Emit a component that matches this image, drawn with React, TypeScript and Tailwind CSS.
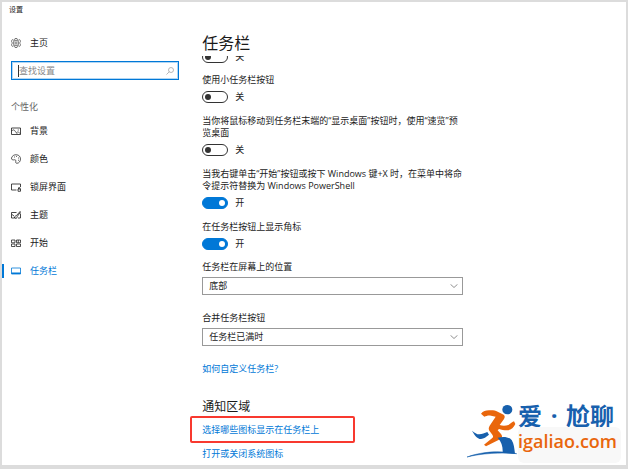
import { useState, type ReactNode } from "react";

const Icon = ({ children }: { children: ReactNode }) => (
  <svg
    viewBox="0 0 20 20"
    className="h-[10px] w-[10px] shrink-0"
    fill="none"
    stroke="currentColor"
    strokeWidth="1.6"
    aria-hidden="true"
  >
    {children}
  </svg>
);

const GearIcon = () => (
  <Icon>
    <g strokeWidth="1.3" opacity="0.85">
      <path d="M8 1h4l.7 2.400 2.300 1 2.300-1.200 2 3-1.400 2.300v3l1.400 2.300-2 3-2.300-1.200-2.300 1L12 19H8l-.7-2.400-2.300-1-2.300 1.200-2-3L2.100 11.500v-3L.7 6.200l2-3L5 4.400l2.300-1z" />
      <circle cx="10" cy="10" r="5.500" />
      <circle cx="10" cy="10" r="2.300" />
    </g>
  </Icon>
);

const PictureIcon = () => (
  <Icon>
    <path d="M1 4h18v13H1z" />
    <path d="M1 9.500l5-2 7 9M11 13l3-1.500 5 4" strokeWidth="1.2" />
    <path d="M13.500 8h2" />
  </Icon>
);

const PaletteIcon = () => (
  <Icon>
    <path d="M1 8c1-4 5-7 10-6.500 5 .4 8 4 8 8.500s-3 8.500-7 8.500c-2.500 0-3-1.500-2.500-3.500.5-2.500-.5-4-2.500-3.500C3.500 12.500.5 11.500 1 8z" strokeWidth="1.4" />
    <path d="M6 6h1.500M10.500 4.800H12M14.500 8H16M14 12.500h1.500" strokeWidth="1.8" />
  </Icon>
);

const LockScreenIcon = () => (
  <Icon>
    <path d="M11 16H1V4h18v6" />
    <path d="M14 14h5v4.500h-5zM15 14v-2.500h3V14" />
  </Icon>
);

const ThemeIcon = () => (
  <Icon>
    <path d="M11 5H1v11h5M14 16h5V7" />
    <path d="M19 2l-8 9M11 11c-3 0-3 2-3 4H6c2 3 7 2 6.500-2L19 4" />
    <path d="M2 9l4 3" />
  </Icon>
);

const StartIcon = () => (
  <Icon>
    <path d="M1 4h7v5.500H1zM11 4h8v5.500h-8zM1 12h7v5H1zM11 12h8v5h-8zM14.500 4v5.500" strokeWidth="1.5" />
  </Icon>
);

const TaskbarIcon = () => (
  <Icon>
    <path d="M1 4h18v12H1z" />
    <path d="M1 14.500h18" strokeWidth="3" />
  </Icon>
);

const navItems = [
  { name: "背景", icon: <PictureIcon /> },
  { name: "颜色", icon: <PaletteIcon /> },
  { name: "锁屏界面", icon: <LockScreenIcon /> },
  { name: "主题", icon: <ThemeIcon /> },
  { name: "开始", icon: <StartIcon /> },
  { name: "任务栏", icon: <TaskbarIcon />, active: true },
];

type ToggleProps = { label: string; defaultOn?: boolean };

const Toggle = ({ label, defaultOn = false }: ToggleProps) => {
  const [on, setOn] = useState(defaultOn);
  return (
    <label className="flex h-3 shrink-0 items-center gap-[7px] text-[9px] leading-3">
      <input
        type="checkbox"
        role="switch"
        aria-label={label}
        checked={on}
        onChange={(e) => setOn(e.target.checked)}
        className="flex h-3 w-[26px] appearance-none items-center rounded-full border border-[#333] px-[2px] before:h-[6px] before:w-[6px] before:rounded-full before:bg-[#333] checked:justify-end checked:border-[#0078d7] checked:bg-[#0078d7] checked:before:bg-white"
      />
      {on ? "开" : "关"}
    </label>
  );
};

const ToggleSetting = ({ label, defaultOn, children }: ToggleProps & { children: ReactNode }) => (
  <div className="flex flex-col gap-[5px]">
    <p>{children}</p>
    <Toggle label={label} defaultOn={defaultOn} />
  </div>
);

type SelectProps = { id: string; label: string; options: string[] };

const SelectSetting = ({ id, label, options }: SelectProps) => (
  <div className="flex flex-col gap-1">
    <label htmlFor={id}>{label}</label>
    <div className="relative">
      <select
        id={id}
        className="block h-[18px] w-full appearance-none border border-[#999] bg-white pl-[6px] text-[9px] leading-4"
      >
        {options.map((option) => (
          <option key={option}>{option}</option>
        ))}
      </select>
      <svg
        viewBox="0 0 8 4"
        className="pointer-events-none absolute top-[7px] right-[5px] h-1 w-2"
        fill="none"
        stroke="#777"
        strokeWidth="0.8"
        aria-hidden="true"
      >
        <path d="M.5.3L4 3.500 7.500.3" />
      </svg>
    </div>
  </div>
);

const Sidebar = () => (
  <aside className="w-[30%] max-w-72 shrink-0">
    <div className="pt-1 pl-[7px] text-[7px] leading-2">设置</div>
    <a href="#home" className="mt-[22px] flex h-[14px] items-center gap-[9px] pl-[9px]">
      <GearIcon />
      主页
    </a>
    <div className="mt-[11px] mr-[10px] ml-[9px] flex h-[19px] items-center border border-[#0078d7] pr-1 pl-[6px] ring-1 ring-[#0078d7]/30 ring-inset">
      <span className="h-3 w-px bg-[#333]" />
      <input
        type="search"
        aria-label="查找设置"
        placeholder="查找设置"
        className="min-w-0 flex-1 text-[9px] leading-3 outline-none placeholder:text-[#888]"
      />
      <svg viewBox="0 0 16 16" className="h-2 w-2" fill="none" stroke="#999" strokeWidth="1.400" aria-hidden="true">
        <circle cx="10" cy="6" r="5" />
        <path d="M6.500 9.500L1 15" />
      </svg>
    </div>
    <h2 className="mt-[21px] pl-[9px] text-[#666]">个性化</h2>
    <nav className="mt-1 flex flex-col">
      {navItems.map((item) => (
        <a
          key={item.name}
          href="#"
          className={
            item.active
              ? "flex h-7 items-center text-[#0078d7]"
              : "flex h-7 items-center"
          }
        >
          <span className={item.active ? "h-[14px] w-[2px] bg-[#0078d7]" : "h-[14px] w-[2px]"} />
          <span className="flex items-center gap-[9px] pl-[7px]">
            {item.icon}
            {item.name}
          </span>
        </a>
      ))}
    </nav>
  </aside>
);

const Watermark = () => (
  <div className="pointer-events-none absolute right-[5px] bottom-[2px] flex h-[60px] items-start gap-px">
    <svg viewBox="-6 8 150 165" className="h-[55px] w-[50px]" aria-hidden="true">
      <ellipse cx="115" cy="28" rx="15" ry="14" fill="#1760ad" />
      <path
        d="M36 40c6-8 14-10 24-10 10-1 18 0 26 4l18 9c4 3 4 8 1 13L92 74c8 3 18 3 26 0 6-3 10-8 17-11l4 8c-5 11-14 19-26 19-8 0-16-2-23-4l-4 4 10 11c5 6 4 12-3 16l-42 21-6-5 24-19c4-3 4-7 1-11l-9-12c-3-5-2-10 1-15l18-27-14-3c-8-2-14 1-20 3z"
        fill="#e9660c"
      />
      <path d="M9 91c8 6 14 11 22 11s16-4 24-7l5 8c-8 7-16 12-24 13-12 0-20-13-27-25z" fill="#1760ad" />
      <path d="M86 112c16-4 34-3 42 7 7 11 8 26 10 41l-37-2c1-18-3-34-15-46z" fill="#1760ad" />
      <path d="M-6 170c40-15 96-21 149-10-50-4-104-1-149 10z" fill="#1760ad" stroke="#1760ad" strokeWidth="1.5" />
    </svg>
    <div className="flex h-[60px] flex-col">
      <div className="flex font-['Noto_Sans_CJK_SC',sans-serif] text-[24px] leading-6 font-bold text-[#1760ad]">
        爱<span className="w-6 text-center font-['Open_Sans',sans-serif]">·</span>尬聊
      </div>
      <div className="h-9 rounded-md bg-[#f8f8f8] pr-1 font-['Open_Sans',sans-serif] text-[18px] leading-7 font-semibold text-[#e9660c]">
        igaliao.com
      </div>
    </div>
  </div>
);

export default function App() {
  return (
    <div className="min-h-screen bg-[#dcdcdc] px-[2px] pt-[2px] pb-1 font-['Open_Sans','Noto_Sans_CJK_SC',sans-serif] text-[9px] leading-3 text-[#1a1a1a]">
      <div className="relative flex bg-white">
        <Sidebar />
        <main className="min-w-0 flex-1 pt-7 pr-4 pb-[5px] pl-[13px]">
          <h1 className="text-[16px] leading-[26px]">任务栏</h1>
          {/* row scrolled halfway under the page title */}
          <div className="flex h-[7px] flex-col justify-end overflow-hidden">
            <Toggle label="锁定任务栏" />
          </div>

          <div className="mt-[11px] flex max-w-[261px] flex-col gap-3">
            <ToggleSetting label="使用小任务栏按钮">使用小任务栏按钮</ToggleSetting>
            <ToggleSetting label="使用速览预览桌面">
              当你将鼠标移动到任务栏末端的“显示桌面”按钮时，使用“速览”预
              <br />
              览桌面
            </ToggleSetting>
            <ToggleSetting label="替换为 Windows PowerShell" defaultOn>
              当我右键单击“开始”按钮或按下 Windows 键+X 时，在菜单中将命
              <br />
              令提示符替换为 Windows PowerShell
            </ToggleSetting>
            <ToggleSetting label="在任务栏按钮上显示角标" defaultOn>
              在任务栏按钮上显示角标
            </ToggleSetting>
          </div>

          <div className="mt-[11px] flex max-w-[261px] flex-col gap-[17px]">
            <SelectSetting id="position" label="任务栏在屏幕上的位置" options={["底部", "顶部", "靠左", "靠右"]} />
            <SelectSetting id="combine" label="合并任务栏按钮" options={["任务栏已满时", "始终隐藏标签", "从不"]} />
          </div>

          <a href="#help" className="mt-[17px] block text-[#0078d7]">
            如何自定义任务栏?
          </a>

          <h2 className="mt-[23px] text-[12px] leading-[18px]">通知区域</h2>
          <div className="-ml-3 flex h-[27px] w-[165px] items-center rounded-xs border-2 border-[#f8392f] pl-[10px]">
            <a href="#icons" className="text-[#0078d7]">
              选择哪些图标显示在任务栏上
            </a>
          </div>
          <a href="#system-icons" className="mt-[5px] block text-[#0078d7]">
            打开或关闭系统图标
          </a>
        </main>
        <Watermark />
      </div>
    </div>
  );
}
